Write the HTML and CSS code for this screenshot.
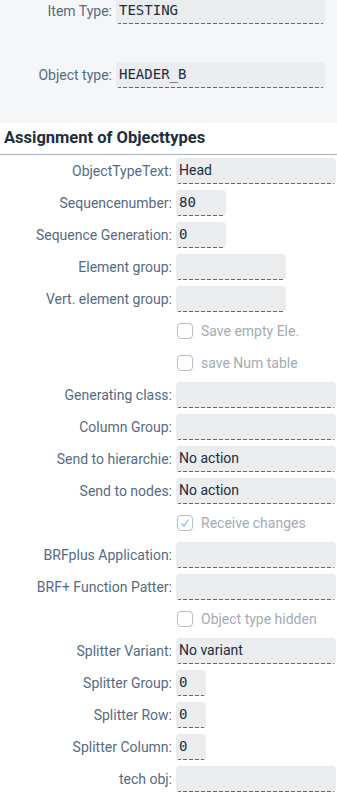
FILE: index.html
```html
<!DOCTYPE html>
<html lang="en">

<head>
  <meta charset="UTF-8">
  <meta name="viewport" content="width=device-width, initial-scale=1.0">
  <title>Object Type Details</title>
  <link rel="stylesheet" href="styles.css">
</head>

<body>
  <div class="top">
    <div class="form form-top">
      <label class="lbl">Item Type:</label>
      <div class="field mono">TESTING</div>
      <div class="empty"></div>
      <div class="empty"></div>
      <label class="lbl">Object type:</label>
      <div class="field mono">HEADER_B</div>
    </div>
  </div>

  <div class="section">
    <h2 class="title">Assignment of Objecttypes</h2>
    <div class="form form-main">
      <label class="lbl">ObjectTypeText:</label>
      <div class="field w-full">Head</div>

      <label class="lbl">Sequencenumber:</label>
      <div class="field mono w-short">80</div>

      <label class="lbl">Sequence Generation:</label>
      <div class="field mono w-short">0</div>

      <label class="lbl">Element group:</label>
      <div class="field w-mid"></div>

      <label class="lbl">Vert. element group:</label>
      <div class="field w-mid"></div>

      <div class="empty"></div>
      <div class="check"><span class="box"></span>Save empty Ele.</div>

      <div class="empty"></div>
      <div class="check"><span class="box"></span>save Num table</div>

      <label class="lbl">Generating class:</label>
      <div class="field w-full"></div>

      <label class="lbl">Column Group:</label>
      <div class="field w-full"></div>

      <label class="lbl">Send to hierarchie:</label>
      <div class="field w-full">No action</div>

      <label class="lbl">Send to nodes:</label>
      <div class="field w-full">No action</div>

      <div class="empty"></div>
      <div class="check">
        <span class="box">
          <svg width="12" height="12" viewBox="0 0 12 12"><polyline points="2.5,6.5 5,9 9.5,2.5" fill="none" stroke="#8fb3dc" stroke-width="1.2"/></svg>
        </span>Receive changes
      </div>

      <label class="lbl">BRFplus Application:</label>
      <div class="field w-full"></div>

      <label class="lbl">BRF+ Function Patter:</label>
      <div class="field w-full"></div>

      <div class="empty"></div>
      <div class="check"><span class="box"></span>Object type hidden</div>

      <label class="lbl">Splitter Variant:</label>
      <div class="field w-full">No variant</div>

      <label class="lbl">Splitter Group:</label>
      <div class="field mono w-tiny">0</div>

      <label class="lbl">Splitter Row:</label>
      <div class="field mono w-tiny">0</div>

      <label class="lbl">Splitter Column:</label>
      <div class="field mono w-tiny">0</div>

      <label class="lbl">tech obj:</label>
      <div class="field w-full"></div>
    </div>
  </div>
</body>

</html>
```

FILE: styles.css
```css
body {
  margin: 0;
  padding: 0;
  font-family: Roboto, 'Liberation Sans', sans-serif;
  font-size: 14px;
  color: #1d2d3e;
  background-color: #ffffff;
  overflow: hidden;
}

.top {
  background-color: #f5f6f7;
  padding-bottom: 35px;
  height: 90px;
}

.form {
  display: grid;
  grid-auto-rows: 26px;
  row-gap: 6px;
  column-gap: 4px;
  align-items: center;
}

.form-top {
  grid-template-columns: 112px 209px;
  margin-top: -2px;
}

.form-main {
  grid-template-columns: 172px auto;
  justify-items: start;
  padding-top: 3px;
}

.lbl {
  color: #556b82;
  text-align: right;
  white-space: nowrap;
  justify-self: end;
}

.field {
  box-sizing: border-box;
  height: 26px;
  line-height: 25px;
  padding: 0 4px 0 3px;
  border-radius: 4px;
  background-color: #eaecee;
  /* dashed bottom edge */
  background-image: linear-gradient(to right, #556b82 4px, transparent 4px);
  background-size: 6px 1px;
  background-position: 1px bottom;
  background-repeat: repeat-x;
  color: #1d2d3e;
  white-space: nowrap;
  overflow: hidden;
}

.form-top .field {
  width: 209px;
}

.mono {
  font-family: 'DejaVu Sans Mono', 'Liberation Mono', monospace;
}

.w-full {
  width: 160px;
}

.w-mid {
  width: 110px;
}

.w-short {
  width: 50px;
}

.w-tiny {
  width: 30px;
}

.title {
  margin: 0;
  height: 31px;
  line-height: 29px;
  padding-left: 4px;
  font-size: 16.5px;
  font-weight: bold;
  color: #1d2d3e;
  border-bottom: 1px solid #a9b4be;
}

.check {
  display: flex;
  align-items: center;
  gap: 8px;
  color: #a4abb3;
  padding-left: 1px;
  white-space: nowrap;
}

.box {
  box-sizing: border-box;
  width: 16px;
  height: 16px;
  border: 1px solid #b7bec6;
  border-radius: 4px;
  background-color: #ffffff;
  display: flex;
  align-items: center;
  justify-content: center;
}
```
